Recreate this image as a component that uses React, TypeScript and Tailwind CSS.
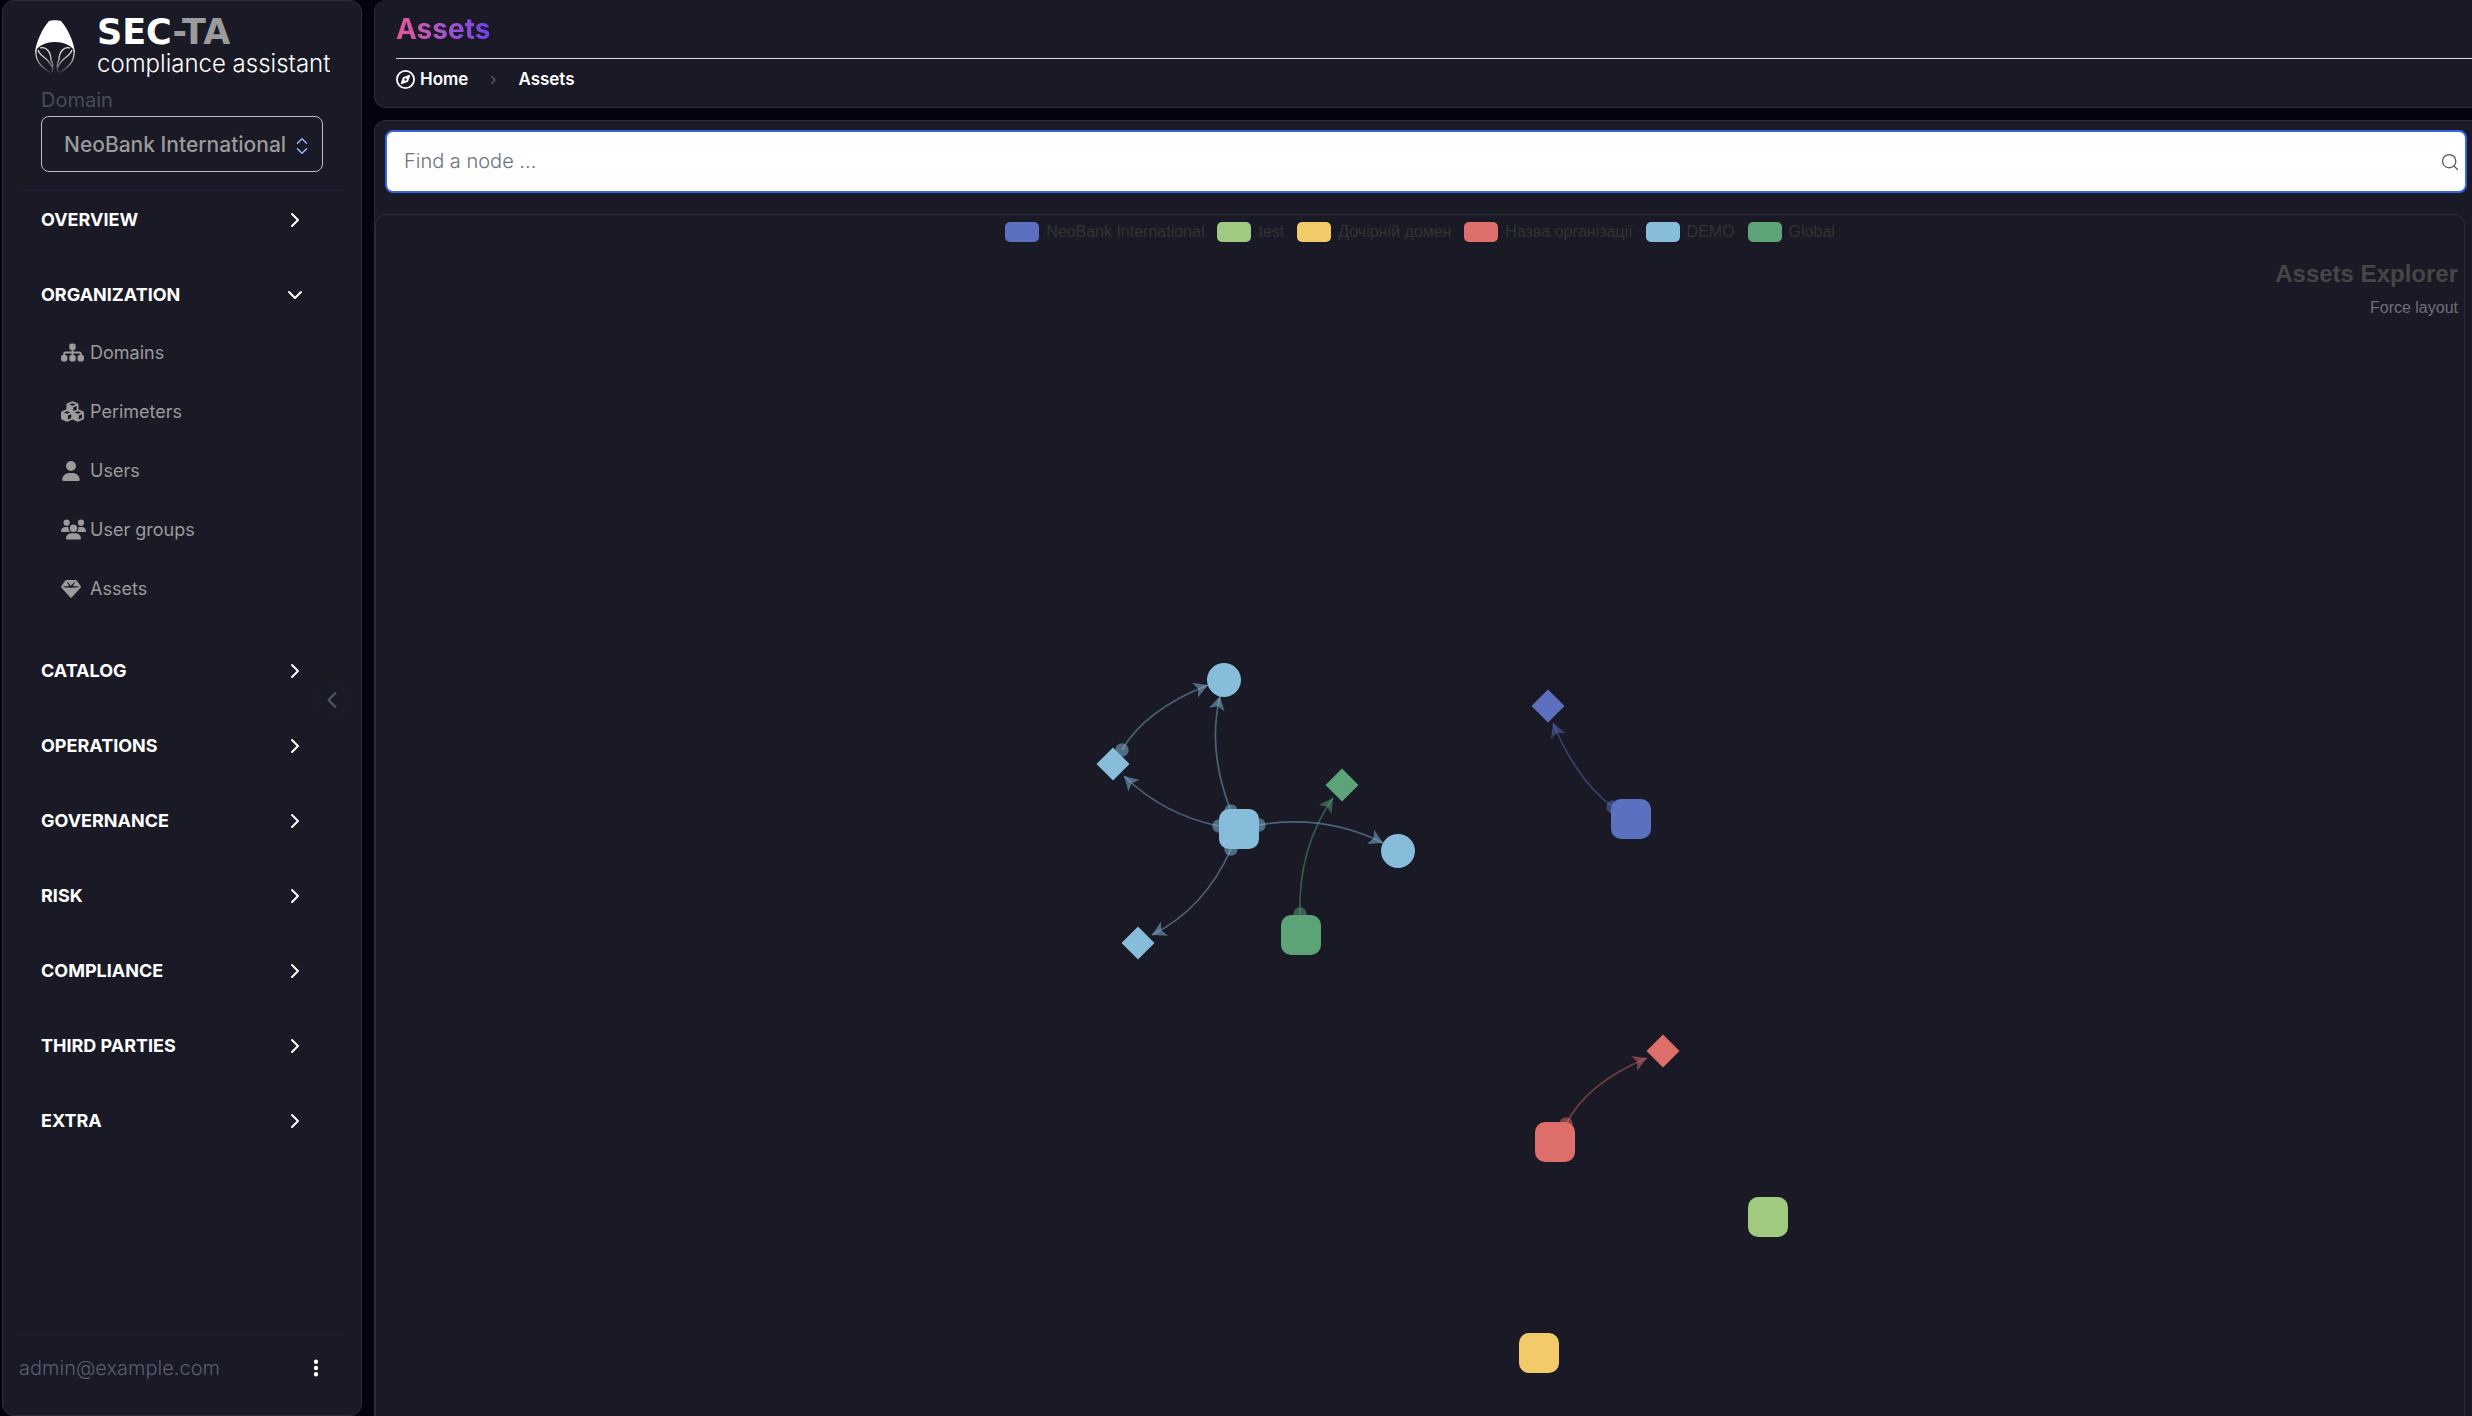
import React from 'react';
import { ChevronDown, ChevronRight, ChevronsUpDown, Search } from 'lucide-react';
import {
  FaChevronLeft,
  FaCubes,
  FaEllipsisVertical,
  FaGem,
  FaRegCompass,
  FaSitemap,
  FaUser,
  FaUsers,
} from 'react-icons/fa6';

const organizationItems = [
  { label: 'Domains', icon: <FaSitemap size={23} /> },
  { label: 'Perimeters', icon: <FaCubes size={23} /> },
  { label: 'Users', icon: <FaUser size={20} /> },
  { label: 'User groups', icon: <FaUsers size={25} /> },
  { label: 'Assets', icon: <FaGem size={20} /> },
];

const sections = [
  { label: 'OVERVIEW' },
  { label: 'ORGANIZATION', items: organizationItems },
  { label: 'CATALOG' },
  { label: 'OPERATIONS' },
  { label: 'GOVERNANCE' },
  { label: 'RISK' },
  { label: 'COMPLIANCE' },
  { label: 'THIRD PARTIES' },
  { label: 'EXTRA' },
];

const colors = {
  indigo: '#5c70c0',
  lime: '#9fca80',
  yellow: '#f3ca6a',
  red: '#dd6e6a',
  sky: '#87bddb',
  green: '#5ca378',
};

type Color = keyof typeof colors;

const legend: { label: string; swatch: string }[] = [
  { label: 'NeoBank International', swatch: 'bg-[#5c70c0]' },
  { label: 'test', swatch: 'bg-[#9fca80]' },
  { label: 'Дочірній домен', swatch: 'bg-[#f3ca6a]' },
  { label: 'Назва організації', swatch: 'bg-[#dd6e6a]' },
  { label: 'DEMO', swatch: 'bg-[#87bddb]' },
  { label: 'Global', swatch: 'bg-[#5ca378]' },
];

interface GraphNode {
  shape: 'square' | 'circle' | 'diamond';
  x: number;
  y: number;
  color: Color;
}

interface GraphEdge {
  from: [number, number];
  via: [number, number];
  to: [number, number];
  color: Color;
}

const nodes: GraphNode[] = [
  { shape: 'circle', x: 848, y: 465, color: 'sky' },
  { shape: 'diamond', x: 737, y: 549, color: 'sky' },
  { shape: 'square', x: 863, y: 614, color: 'sky' },
  { shape: 'circle', x: 1022, y: 636, color: 'sky' },
  { shape: 'diamond', x: 762, y: 728, color: 'sky' },
  { shape: 'diamond', x: 966, y: 570, color: 'green' },
  { shape: 'square', x: 925, y: 720, color: 'green' },
  { shape: 'diamond', x: 1172, y: 491, color: 'indigo' },
  { shape: 'square', x: 1255, y: 604, color: 'indigo' },
  { shape: 'diamond', x: 1287, y: 836, color: 'red' },
  { shape: 'square', x: 1179, y: 927, color: 'red' },
  { shape: 'square', x: 1392, y: 1002, color: 'lime' },
  { shape: 'square', x: 1163, y: 1138, color: 'yellow' },
];

const edges: GraphEdge[] = [
  { from: [746, 535], via: [769, 495], to: [832, 470], color: 'sky' },
  { from: [855, 596], via: [831, 536], to: [844, 481], color: 'sky' },
  { from: [843, 611], via: [788, 600], to: [748, 561], color: 'sky' },
  { from: [883, 610], via: [949, 599], to: [1007, 628], color: 'sky' },
  { from: [855, 634], via: [829, 693], to: [776, 720], color: 'sky' },
  { from: [924, 699], via: [922, 633], to: [957, 583], color: 'green' },
  { from: [1237, 592], via: [1201, 566], to: [1177, 508], color: 'indigo' },
  { from: [1190, 909], via: [1211, 868], to: [1271, 843], color: 'red' },
];

const Logo: React.FC = () => (
  <svg className="mt-[7px]" width="40" height="54" viewBox="0 0 40 54" fill="none" aria-hidden="true">
    <defs>
      <linearGradient id="hood-fade" x1="0" y1="24" x2="0" y2="54" gradientUnits="userSpaceOnUse">
        <stop offset="0" stopColor="#fff" />
        <stop offset="0.5" stopColor="#fff" stopOpacity="0.7" />
        <stop offset="1" stopColor="#fff" stopOpacity="0.05" />
      </linearGradient>
    </defs>
    <path
      d="M14 1C16 0 24 0 26 1C33 9 39 22 40 33C38 26 30 22 20 22C10 22 2 26 0 33C1 22 7 9 14 1Z"
      fill="#fff"
    />
    <g stroke="url(#hood-fade)" strokeWidth="1.3">
      <path d="M1 30C0 41 6 47 16 53" />
      <path d="M39 30C40 41 34 47 24 53" />
      <path d="M5 28C11 26 16 32 16 40C18 43 18 48 17 52" />
      <path d="M35 28C29 26 24 32 24 40C22 43 22 48 23 52" />
      <path d="M3 30C5 37 13 37 17 47" />
      <path d="M37 30C35 37 27 37 23 47" />
    </g>
  </svg>
);

const Sidebar: React.FC = () => (
  <aside className="relative flex w-[360px] shrink-0 flex-col rounded-xl border border-[#2c2c3a] bg-[#1a1926] px-4">
    <div className="flex items-start gap-[22px] pl-4 pt-3">
      <Logo />
      <div>
        <div className="font-['DejaVu_Sans',sans-serif] text-[35px] font-bold leading-[38px] text-white">
          SEC<span className="text-[#9b9b9b]">-TA</span>
        </div>
        <div className="whitespace-nowrap text-2xl font-light leading-[26px] text-white">compliance assistant</div>
      </div>
    </div>

    <div className="border-b border-[#1e1c38] px-[22px] pb-[18px] pt-[7px]">
      <label htmlFor="domain" className="block text-xl leading-8 text-[#454d5b]">
        Domain
      </label>
      <div className="relative">
        <select
          id="domain"
          className="block h-14 w-full appearance-none rounded-lg border border-[#b4c0d0] bg-transparent pl-[22px] pr-8 pt-0.5 text-[21px] font-medium text-[#9b9b9b]"
        >
          <option>NeoBank International</option>
        </select>
        <ChevronsUpDown
          size={22}
          strokeWidth={1.5}
          className="pointer-events-none absolute right-2.5 top-[19px] text-[#a5b4fc]"
        />
      </div>
    </div>

    <nav className="flex flex-1 flex-col gap-[18px] px-[22px]">
      {sections.map((section) => (
        <div key={section.label}>
          <button
            type="button"
            className="flex h-[57px] w-full items-center justify-between pr-4 text-lg font-bold text-white"
          >
            {section.label}
            {section.items ? <ChevronDown size={24} /> : <ChevronRight size={24} />}
          </button>
          {section.items && (
            <ul className="pb-1.5">
              {section.items.map((item) => (
                <li key={item.label}>
                  <a href="#" className="flex h-[59px] items-center pl-5 text-lg text-[#9b9b9b]">
                    <span className="flex w-[29px] shrink-0">{item.icon}</span>
                    {item.label}
                  </a>
                </li>
              ))}
            </ul>
          )}
        </div>
      ))}
    </nav>

    <div className="flex h-20 items-center justify-between border-t border-[#1e1c38] pb-4 pr-[19px]">
      <span className="text-xl font-light text-[#56606f]">admin@example.com</span>
      <button type="button" aria-label="More" className="text-white">
        <FaEllipsisVertical size={20} />
      </button>
    </div>

    {/* Collapse handle */}
    <button
      type="button"
      aria-label="Collapse sidebar"
      className="absolute right-3 top-[683px] flex size-8 items-center justify-center rounded-full border border-[#1f1b3c] text-[#4b5563]"
    >
      <FaChevronLeft size={18} />
    </button>
  </aside>
);

const NodeShape: React.FC<{ node: GraphNode }> = ({ node }) => {
  const { shape, x, y, color } = node;
  const fill = colors[color];
  if (shape === 'circle') return <circle cx={x} cy={y} r={17} fill={fill} />;
  if (shape === 'diamond') {
    return <path d={`M${x} ${y - 16.5}l16.5 16.5l-16.5 16.5l-16.5 -16.5z`} fill={fill} />;
  }
  return <rect x={x - 20} y={y - 20} width={40} height={40} rx={10} fill={fill} />;
};

const Edge: React.FC<{ edge: GraphEdge }> = ({ edge }) => {
  const { from, via, to, color } = edge;
  const stroke = colors[color];
  const angle = (Math.atan2(to[1] - via[1], to[0] - via[0]) * 180) / Math.PI;
  return (
    <g>
      <path
        d={`M${from.join(' ')}Q${via.join(' ')} ${to.join(' ')}`}
        fill="none"
        stroke={stroke}
        strokeOpacity={0.45}
        strokeWidth={1.7}
      />
      <circle cx={from[0]} cy={from[1]} r={6.7} fill={stroke} fillOpacity={0.5} />
      <path
        d="M0 0L-14 -8L-10.5 0L-14 8Z"
        fill={stroke}
        fillOpacity={0.5}
        transform={`translate(${to.join(' ')}) rotate(${angle})`}
      />
    </g>
  );
};

const AssetGraph: React.FC = () => (
  <svg
    className="absolute inset-0 h-full w-full"
    viewBox="0 0 2088 1200"
    preserveAspectRatio="xMidYMin meet"
    role="img"
    aria-label="Assets graph"
  >
    {edges.map((edge) => (
      <Edge key={edge.from.join()} edge={edge} />
    ))}
    {nodes.map((node) => (
      <NodeShape key={`${node.x}-${node.y}`} node={node} />
    ))}
  </svg>
);

export default function App() {
  return (
    <div className="flex h-screen gap-3 overflow-hidden bg-[#030210] pl-0.5 font-['Inter',sans-serif]">
      <Sidebar />

      <main className="flex min-w-0 flex-1 flex-col gap-3">
        <header className="rounded-l-xl border-b border-l border-[#2c2c3a] bg-[#1a1926] pl-[21px]">
          <div className="flex h-[59px] items-center border-b border-[#ded6e6]">
            <h1 className="bg-gradient-to-r from-[#e4559a] to-[#6f3df0] bg-clip-text text-[28px] font-bold leading-10 text-transparent">
              Assets
            </h1>
          </div>
          <nav aria-label="Breadcrumb" className="flex items-center pb-2 text-[17px] font-semibold leading-10 text-white">
            <a href="#" className="flex items-center gap-[5px]">
              <FaRegCompass size={19} />
              Home
            </a>
            <span className="w-[50px] text-center font-normal text-[#565c6c]">›</span>
            <span>Assets</span>
          </nav>
        </header>

        <section className="flex flex-1 flex-col rounded-tl-xl border-l border-t border-[#2c2c3a] bg-[#1a1926] pr-[7px] pt-[9px]">
          <div className="relative -mr-0.5 ml-2.5">
            <input
              type="search"
              aria-label="Find a node"
              placeholder="Find a node ..."
              className="block h-[63px] w-full rounded-lg border-2 border-[#3863e6] bg-white pb-0.5 pl-[17px] pr-12 text-xl font-light text-gray-900 outline-none placeholder:text-[#6b7280]"
            />
            <Search size={20} strokeWidth={1.5} className="absolute right-[7px] top-[22px] text-[#4b5563]" />
          </div>

          <div className="relative mt-[21px] flex-1 rounded-t-xl border-x border-t border-[#2c2c3a] font-['Liberation_Sans',Arial,sans-serif]">
            <AssetGraph />
            <ul className="flex justify-center gap-[13px] pt-[7px]">
              {legend.map((entry) => (
                <li key={entry.label} className="flex items-center gap-[7px] text-base leading-5 text-[#333]">
                  <span className={`h-5 w-[34px] rounded-[5px] ${entry.swatch}`} />
                  {entry.label}
                </li>
              ))}
            </ul>
            <div className="pr-1.5 pt-4 text-right">
              <h2 className="text-2xl font-bold leading-8 text-[#464646]">Assets Explorer</h2>
              <p className="text-base leading-9 text-[#6e7079]">Force layout</p>
            </div>
          </div>
        </section>
      </main>
    </div>
  );
}
